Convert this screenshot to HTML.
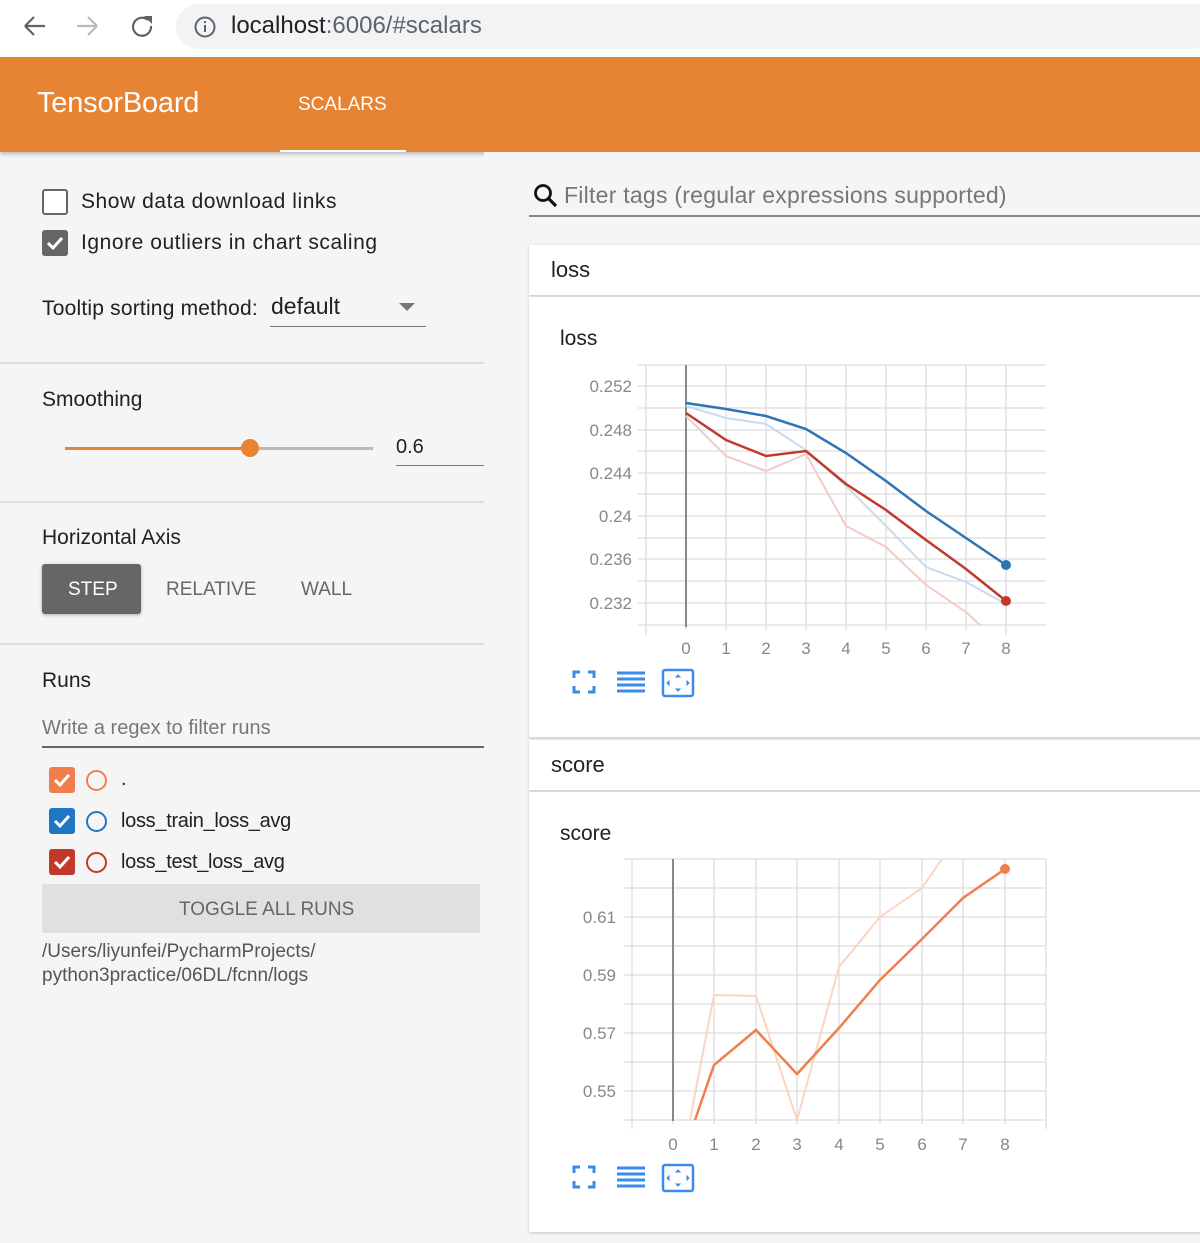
<!DOCTYPE html>
<html><head><meta charset="utf-8"><style>
*{box-sizing:border-box;margin:0;padding:0}
body{width:1200px;height:1243px;overflow:hidden;background:#f5f5f5;font-family:"Liberation Sans",sans-serif;color:#212121;position:relative}
.abs{position:absolute}
.chrome{left:0;top:0;width:1200px;height:57px;background:#fff}
.url{left:176px;top:4px;width:1040px;height:45px;border-radius:23px;background:#f1f3f4}
.bar{left:0;top:57px;width:1200px;height:95px;background:#e68433;box-shadow:0 2px 4px rgba(0,0,0,.25)}
.t{position:absolute;white-space:nowrap}
.ls{letter-spacing:0.55px}
.cb{position:absolute;width:26px;height:26px;border-radius:3px}
.hr{position:absolute;left:0;width:484px;height:2px;background:#ddd}
.card{position:absolute;left:529px;width:680px;background:#fff;box-shadow:0 1px 3px rgba(0,0,0,.2)}
</style></head><body>
<div class="abs chrome"></div>
<div class="abs url"></div>
<svg class="abs" style="left:20px;top:12px" width="160" height="30" fill="none" stroke-width="2.2">
<path d="M5 14h20M5 14l9-9M5 14l9 9" stroke="#5f6368"/>
<path d="M57 14h20M77 14l-9-9M77 14l-9 9" stroke="#bbb"/>
<path d="M128 8a9 9 0 1 0 3 6" stroke="#5f6368"/><path d="M124 4h8v8z" fill="#5f6368" stroke="none"/>
</svg>
<svg class="abs" style="left:193px;top:15px" width="24" height="24"><circle cx="12" cy="12" r="9.5" fill="none" stroke="#5f6368" stroke-width="2"/><rect x="11" y="10" width="2" height="7" fill="#5f6368"/><rect x="11" y="6" width="2" height="2" fill="#5f6368"/></svg>
<div class="t" style="left:231px;top:12px;font-size:24px;color:#202124">localhost<span style="color:#5f6368">:6006/#scalars</span></div>
<div class="abs bar"></div>
<div class="t" style="left:37px;top:87px;font-size:29px;color:#fff;letter-spacing:-0.2px">TensorBoard</div>
<div class="t" style="left:298px;top:94px;font-size:19px;color:#fff">SCALARS</div>
<div class="abs" style="left:280px;top:150px;width:126px;height:2px;background:#fff"></div>

<div class="cb" style="left:42px;top:189px;border:2px solid #666;background:#fff"></div>
<div class="t ls" style="left:81px;top:190px;font-size:21px">Show data download links</div>
<div class="cb" style="left:42px;top:230px;background:#666"><svg width="26" height="26"><path d="M6 13l5 5 9-10" stroke="#fff" stroke-width="3" fill="none"/></svg></div>
<div class="t ls" style="left:81px;top:231px;font-size:21px">Ignore outliers in chart scaling</div>
<div class="t" style="left:42px;top:297px;font-size:21px;letter-spacing:0.2px">Tooltip sorting method:</div>
<div class="t" style="left:271px;top:293px;font-size:23px">default</div>
<div class="abs" style="left:270px;top:326px;width:156px;height:1px;background:#777"></div>
<svg class="abs" style="left:399px;top:303px" width="16" height="10"><path d="M0 0h16L8 8z" fill="#777"/></svg>
<div class="hr" style="top:362px"></div>
<div class="t" style="left:42px;top:388px;font-size:21px">Smoothing</div>
<div class="abs" style="left:65px;top:447px;width:185px;height:3px;background:#e68433"></div>
<div class="abs" style="left:250px;top:447px;width:123px;height:3px;background:#bbb"></div>
<div class="abs" style="left:241px;top:439px;width:18px;height:18px;border-radius:50%;background:#e68433"></div>
<div class="t" style="left:396px;top:436px;font-size:20px">0.6</div>
<div class="abs" style="left:396px;top:465px;width:89px;height:1px;background:#777"></div>
<div class="hr" style="top:501px"></div>
<div class="t" style="left:42px;top:526px;font-size:21px">Horizontal Axis</div>
<div class="abs" style="left:42px;top:564px;width:99px;height:50px;background:#666;border-radius:3px;box-shadow:0 1px 3px rgba(0,0,0,.3)"></div>
<div class="t" style="left:68px;top:579px;font-size:19px;color:#fff">STEP</div>
<div class="t" style="left:166px;top:579px;font-size:19px;color:#666">RELATIVE</div>
<div class="t" style="left:301px;top:579px;font-size:19px;color:#666">WALL</div>
<div class="hr" style="top:643px"></div>
<div class="t" style="left:42px;top:669px;font-size:21px">Runs</div>
<div class="t" style="left:42px;top:717px;font-size:20px;color:#777">Write a regex to filter runs</div>
<div class="abs" style="left:42px;top:746px;width:443px;height:2px;background:#666"></div>
<div class="cb" style="left:49px;top:767px;background:#f07f4d"><svg width="26" height="26"><path d="M6 13l5 5 9-10" stroke="#fff" stroke-width="3" fill="none"/></svg></div>
<div class="abs" style="left:86px;top:770px;width:21px;height:21px;border-radius:50%;border:2px solid #f07f4d"></div>
<div class="t" style="left:121px;top:768px;font-size:20px">.</div>
<div class="cb" style="left:49px;top:808px;background:#1f77c4"><svg width="26" height="26"><path d="M6 13l5 5 9-10" stroke="#fff" stroke-width="3" fill="none"/></svg></div>
<div class="abs" style="left:86px;top:811px;width:21px;height:21px;border-radius:50%;border:2px solid #1f77c4"></div>
<div class="t" style="left:121px;top:810px;font-size:20px;letter-spacing:-0.3px">loss_train_loss_avg</div>
<div class="cb" style="left:49px;top:849px;background:#c2392b"><svg width="26" height="26"><path d="M6 13l5 5 9-10" stroke="#fff" stroke-width="3" fill="none"/></svg></div>
<div class="abs" style="left:86px;top:852px;width:21px;height:21px;border-radius:50%;border:2px solid #c2392b"></div>
<div class="t" style="left:121px;top:851px;font-size:20px;letter-spacing:-0.3px">loss_test_loss_avg</div>
<div class="abs" style="left:42px;top:884px;width:438px;height:49px;background:#e0e0e0;border-radius:2px"></div>
<div class="t" style="left:179px;top:899px;font-size:19px;color:#666">TOGGLE ALL RUNS</div>
<div class="t" style="left:42px;top:940px;font-size:19px;color:#555;line-height:24px">/Users/liyunfei/PycharmProjects/<br>python3practice/06DL/fcnn/logs</div>

<div class="abs" style="left:484px;top:152px;width:716px;height:1091px;background:#f5f5f5"></div>
<svg class="abs" style="left:532px;top:182px" width="28" height="28"><circle cx="11" cy="11" r="7.5" fill="none" stroke="#111" stroke-width="2.8"/><path d="M16 16l8 8" stroke="#111" stroke-width="3.2"/></svg>
<div class="t" style="left:564px;top:182px;font-size:23px;color:#777;letter-spacing:0.25px">Filter tags (regular expressions supported)</div>
<div class="abs" style="left:529px;top:215px;width:671px;height:2px;background:#888"></div>

<div class="card" style="top:245px;height:50px"></div>
<div class="t" style="left:551px;top:257px;font-size:22px">loss</div>
<div class="card" style="top:297px;height:440px"></div>
<div class="t" style="left:560px;top:327px;font-size:21px">loss</div>
<svg class="abs" style="left:560px;top:360px" width="500" height="300" font-family="Liberation Sans" font-size="17" fill="#888">
<g stroke="#ddd" stroke-width="1.3">
<path d="M86 5v270M126 5v265M166 5v265M206 5v265M246 5v265M286 5v265M326 5v265M366 5v265M406 5v265M446 5v270"/>
<path d="M78 5h408M78 26h408M78 48h408M78 70h408M78 91h408M78 113h408M78 134h408M78 156h408M78 178h408M78 199h408M78 221h408M78 243h408M78 265h408"/>
</g>
<path d="M126 5v262" stroke="#888" stroke-width="2"/>
<g text-anchor="end"><text x="72" y="32">0.252</text><text x="72" y="76">0.248</text><text x="72" y="119">0.244</text><text x="72" y="162">0.24</text><text x="72" y="205">0.236</text><text x="72" y="249">0.232</text></g>
<g text-anchor="middle"><text x="126" y="294">0</text><text x="166" y="294">1</text><text x="206" y="294">2</text><text x="246" y="294">3</text><text x="286" y="294">4</text><text x="326" y="294">5</text><text x="366" y="294">6</text><text x="406" y="294">7</text><text x="446" y="294">8</text></g>
<polyline points="126,46 166,58 206,64 246,90 286,126 326,166 366,207 406,222 446,244" fill="none" stroke="#c5dcef" stroke-width="2"/>
<polyline points="126,56 166,96 206,111 246,94 286,166 326,187 366,225 406,252 420,265" fill="none" stroke="#f3cbc6" stroke-width="2"/>
<polyline points="126,43 166,49 206,56 246,69 286,93 326,121 366,151 406,178 446,205" fill="none" stroke="#2f74b5" stroke-width="2.5"/>
<polyline points="126,53 166,80 206,96 246,91 286,124 326,150 366,180 406,209 446,241" fill="none" stroke="#c2392b" stroke-width="2.5"/>
<circle cx="446" cy="205" r="5" fill="#2f74b5"/><circle cx="446" cy="241" r="5" fill="#c2392b"/>
</svg>
<svg class="abs" style="left:570px;top:668px" width="130" height="32" fill="none" stroke="#3b8be8">
<path d="M4 10V4h6M18 4h6v6M24 18v6h-6M10 24H4v-6" stroke-width="3"/>
<path d="M47 5h28M47 11h28M47 17h28M47 23h28" stroke-width="3"/>
<rect x="93" y="2" width="30" height="26" rx="2" stroke-width="2.5"/>
<path d="M108 7l-2 2h4zM108 23l-2-2h4zM97 15l2-2v4zM119 15l-2-2v4z" fill="#3b8be8" stroke-width="1"/>
</svg>

<div class="card" style="top:740px;height:50px"></div>
<div class="t" style="left:551px;top:752px;font-size:22px">score</div>
<div class="card" style="top:792px;height:440px"></div>
<div class="t" style="left:560px;top:822px;font-size:21px">score</div>
<svg class="abs" style="left:560px;top:855px" width="500" height="310" font-family="Liberation Sans" font-size="17" fill="#888">
<g stroke="#ddd" stroke-width="1.3">
<path d="M72 4v270M113 4v265M154 4v265M196 4v265M237 4v265M279 4v265M320 4v265M362 4v265M403 4v265M445 4v265M486 4v270"/>
<path d="M64 4h422M64 33h422M64 62h422M64 91h422M64 120h422M64 149h422M64 178h422M64 207h422M64 236h422M64 265h422"/>
</g>
<path d="M113 4v262" stroke="#888" stroke-width="2"/>
<g text-anchor="end"><text x="56" y="68">0.61</text><text x="56" y="126">0.59</text><text x="56" y="184">0.57</text><text x="56" y="242">0.55</text></g>
<g text-anchor="middle"><text x="113" y="295">0</text><text x="154" y="295">1</text><text x="196" y="295">2</text><text x="237" y="295">3</text><text x="279" y="295">4</text><text x="320" y="295">5</text><text x="362" y="295">6</text><text x="403" y="295">7</text><text x="445" y="295">8</text></g>
<polyline points="130,265 154,140 196,141 237,265 279,112 320,62 362,33 382,4" fill="none" stroke="#fbd5c3" stroke-width="2"/>
<polyline points="135,265 154,210 196,175 237,219 279,173 320,125 362,84 403,43 445,14" fill="none" stroke="#f07f4d" stroke-width="2.5"/>
<circle cx="445" cy="14" r="5" fill="#f07f4d"/>
</svg>
<svg class="abs" style="left:570px;top:1163px" width="130" height="32" fill="none" stroke="#3b8be8">
<path d="M4 10V4h6M18 4h6v6M24 18v6h-6M10 24H4v-6" stroke-width="3"/>
<path d="M47 5h28M47 11h28M47 17h28M47 23h28" stroke-width="3"/>
<rect x="93" y="2" width="30" height="26" rx="2" stroke-width="2.5"/>
<path d="M108 7l-2 2h4zM108 23l-2-2h4zM97 15l2-2v4zM119 15l-2-2v4z" fill="#3b8be8" stroke-width="1"/>
</svg>
</body></html>
